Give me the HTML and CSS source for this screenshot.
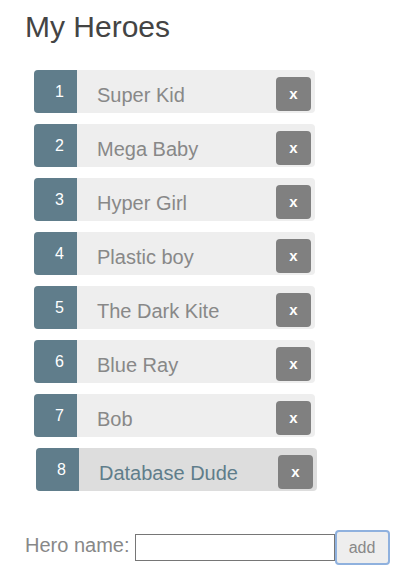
FILE: index.html
```html
<!DOCTYPE html>
<html>
<head>
<meta charset="utf-8">
<link rel="stylesheet" href="styles.css">
</head>
<body>
<div class="page">
  <h2 class="title">My Heroes</h2>
  <ul class="heroes">
    <li class="hero"><span class="badge">1</span><span class="name">Super Kid</span><button class="delete">x</button></li>
    <li class="hero"><span class="badge">2</span><span class="name">Mega Baby</span><button class="delete">x</button></li>
    <li class="hero"><span class="badge">3</span><span class="name">Hyper Girl</span><button class="delete">x</button></li>
    <li class="hero"><span class="badge">4</span><span class="name">Plastic boy</span><button class="delete">x</button></li>
    <li class="hero"><span class="badge">5</span><span class="name">The Dark Kite</span><button class="delete">x</button></li>
    <li class="hero"><span class="badge">6</span><span class="name">Blue Ray</span><button class="delete">x</button></li>
    <li class="hero"><span class="badge">7</span><span class="name">Bob</span><button class="delete">x</button></li>
    <li class="hero hovered"><span class="badge">8</span><span class="name">Database Dude</span><button class="delete">x</button></li>
  </ul>
  <div class="add-row">
    <label class="label">Hero name:</label>
    <input class="name-input" type="text">
    <button class="add">add</button>
  </div>
</div>
</body>
</html>
```
FILE: styles.css
```css
html, body {
  margin: 0;
  padding: 0;
  background: #fff;
}
.page {
  display: flex;
  flex-direction: column;
  padding: 10px 0 0 25px;
  font-family: "Liberation Sans", Arial, sans-serif;
}
.title {
  margin: 0;
  font-size: 30px;
  line-height: 34px;
  font-weight: normal;
  color: #444;
}
.heroes {
  list-style: none;
  margin: 26px 0 0 0;
  padding: 0 0 0 9px;
  display: flex;
  flex-direction: column;
  gap: 11px;
}
.hero {
  width: 281px;
  height: 43px;
  display: flex;
  align-items: flex-start;
  background: #eee;
  border-radius: 4px;
  color: #888;
}
.hero.hovered {
  margin-left: 2px;
  background: #ddd;
  color: #607d8b;
}
.badge {
  box-sizing: border-box;
  width: 43px;
  height: 43px;
  line-height: 43px;
  padding-right: 13px;
  text-align: right;
  font-size: 16px;
  color: #fff;
  background: #607d8b;
  border-radius: 4px 0 0 4px;
}
.name {
  margin-left: 20px;
  padding-top: 8px;
  line-height: 35px;
  font-size: 20px;
}
.delete {
  margin: 7px 4px 0 auto;
  width: 35px;
  height: 34px;
  padding: 0 0 2px 0;
  border: none;
  border-radius: 4px;
  background: #808080;
  color: #fff;
  font-family: "Liberation Sans", Arial, sans-serif;
  font-weight: bold;
  font-size: 15px;
}
.add-row {
  display: flex;
  align-items: center;
  margin-top: 39px;
}
.label {
  font-size: 20px;
  line-height: 23px;
  color: #888;
  margin-bottom: 4px;
  margin-right: 5px;
}
.name-input {
  box-sizing: border-box;
  width: 200px;
  height: 27px;
  margin: 0;
  border: 1px solid #767676;
  padding: 0 4px;
  font-family: "Liberation Sans", Arial, sans-serif;
  font-size: 16px;
}
.add {
  box-sizing: border-box;
  width: 55px;
  height: 35px;
  margin: 0;
  padding: 0;
  border: 2px solid #8fb1de;
  border-radius: 4px;
  background: #eee;
  color: #888;
  font-family: "Liberation Sans", Arial, sans-serif;
  font-size: 16px;
}
```
